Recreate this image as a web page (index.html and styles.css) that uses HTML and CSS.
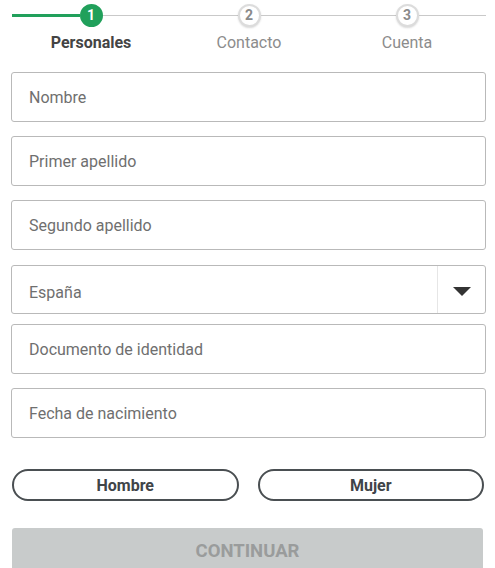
FILE: index.html
```html
<!DOCTYPE html>
<html lang="es">
<head>
<meta charset="utf-8">
<link rel="stylesheet" href="styles.css">
</head>
<body>
<div class="page">
  <div class="stepper">
    <div class="step active">
      <div class="track"><span class="line left done"></span><span class="dot">1</span><span class="line right"></span></div>
      <div class="label">Personales</div>
    </div>
    <div class="step">
      <div class="track"><span class="line left"></span><span class="dot">2</span><span class="line right"></span></div>
      <div class="label">Contacto</div>
    </div>
    <div class="step">
      <div class="track"><span class="line left"></span><span class="dot">3</span><span class="line right"></span></div>
      <div class="label">Cuenta</div>
    </div>
  </div>

  <form class="form">
    <div class="field">Nombre</div>
    <div class="field">Primer apellido</div>
    <div class="field pre-select">Segundo apellido</div>
    <div class="field select"><span class="sel-text">España</span><span class="sel-btn"><svg width="18" height="10" viewBox="0 0 18 10"><path d="M0 0 H18 L9 9 Z" fill="#333"/></svg></span></div>
    <div class="field">Documento de identidad</div>
    <div class="field">Fecha de nacimiento</div>

    <div class="genders">
      <button type="button" class="pill">Hombre</button>
      <button type="button" class="pill">Mujer</button>
    </div>

    <button type="button" class="submit">CONTINUAR</button>
  </form>
</div>
</body>
</html>
```
FILE: styles.css
```css
* { box-sizing: border-box; }
html, body { margin: 0; padding: 0; background: #fff; }
body { font-family: Roboto, "Liberation Sans", Arial, sans-serif; overflow: hidden; }
.page { padding: 3px 9px 0 11px; }

.stepper { display: flex; padding-left: 1px; }
.step { flex: 1; display: flex; flex-direction: column; align-items: center; }
.track { width: 100%; height: 24px; display: flex; align-items: center; }
.line { flex: 1; height: 1px; background: #c9c9c9; }
.line.done { height: 3px; background: #21a05b; }
.dot {
  width: 23px; height: 23px; border-radius: 50%;
  background: #fff; border: 2px solid #dcdcdc;
  box-shadow: 0 1px 2px rgba(0,0,0,0.15);
  display: flex; align-items: center; justify-content: center;
  font-size: 14px; font-weight: 700; color: #8a8a8a;
}
.step.active .dot { background: #21a05b; border-color: #21a05b; color: #fff; box-shadow: none; }
.label { margin-top: 5px; font-size: 16px; color: #8c8c8c; line-height: 21px; }
.step.active .label { color: #444; font-weight: 700; }

.form { display: flex; flex-direction: column; margin-top: 19px; }
.field {
  height: 50px; border: 1px solid #b9b9b9; border-radius: 3px;
  display: flex; align-items: center; padding-left: 17px;
  font-size: 16px; color: #6f6f6f; margin-bottom: 14px;
}
.field.pre-select { margin-bottom: 15px; }
.field.select { padding-left: 0; height: 49px; margin-bottom: 10px; }
.sel-text { flex: 1; padding-left: 17px; padding-top: 6px; }
.sel-btn {
  width: 48px; height: 100%; border-left: 1px solid #e6e6e6;
  display: flex; align-items: center; justify-content: center; padding-top: 4px;
}
.genders { display: flex; gap: 19px; margin-top: 17px; padding-left: 1px; padding-right: 2px; }
.pill {
  flex: 1; height: 32px; border: 2px solid #4a4f52; border-radius: 16px;
  background: #fff; font-family: inherit; font-size: 16px; font-weight: 700; color: #3f4448;
}
.submit {
  margin-top: 27px; margin-left: 1px; margin-right: 3px; height: 48px;
  background: #c8cbcb; border: none; border-radius: 3px;
  font-family: inherit; font-size: 18.5px; font-weight: 700; color: #9a9c9c;
  padding-bottom: 4px;
}
```
